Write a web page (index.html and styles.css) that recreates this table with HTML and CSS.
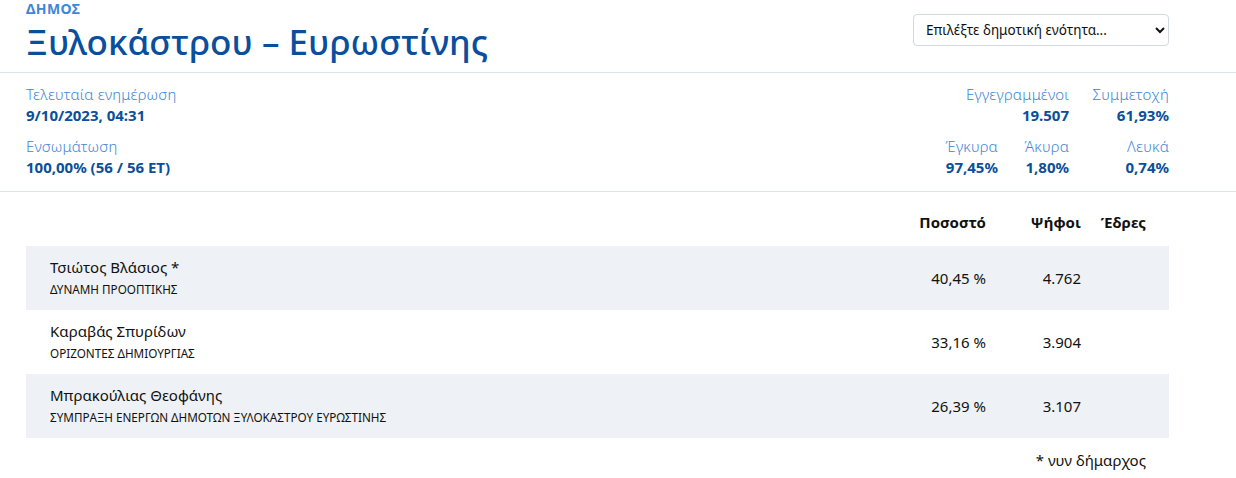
FILE: index.html
```html
<!DOCTYPE html>
<html lang="el">
<head>
<meta charset="utf-8">
<link rel="stylesheet" href="styles.css">
</head>
<body>
<header class="top">
  <div class="titles">
    <div class="kicker">Δημος</div>
    <h1 class="title">Ξυλοκάστρου – Ευρωστίνης</h1>
  </div>
  <select class="picker">
    <option>Επιλέξτε δημοτική ενότητα...</option>
  </select>
</header>
<section class="stats">
  <div class="stats-left">
    <div class="stat">
      <div class="label">Τελευταία ενημέρωση</div>
      <div class="value">9/10/2023, 04:31</div>
    </div>
    <div class="stat">
      <div class="label">Ενσωμάτωση</div>
      <div class="value">100,00% (56 / 56 ΕΤ)</div>
    </div>
  </div>
  <div class="stats-right">
    <div class="stat r"></div>
    <div class="stat r">
      <div class="label">Εγγεγραμμένοι</div>
      <div class="value">19.507</div>
    </div>
    <div class="stat r">
      <div class="label">Συμμετοχή</div>
      <div class="value">61,93%</div>
    </div>
    <div class="stat r">
      <div class="label">Έγκυρα</div>
      <div class="value">97,45%</div>
    </div>
    <div class="stat r">
      <div class="label">Άκυρα</div>
      <div class="value">1,80%</div>
    </div>
    <div class="stat r">
      <div class="label">Λευκά</div>
      <div class="value">0,74%</div>
    </div>
  </div>
</section>
<main class="results">
  <div class="row head">
    <div class="cell name"></div>
    <div class="cell pct">Ποσοστό</div>
    <div class="cell votes">Ψήφοι</div>
    <div class="cell seats">Έδρες</div>
  </div>
  <div class="row alt">
    <div class="cell name">
      <div class="cand">Τσιώτος Βλάσιος *</div>
      <div class="party">ΔΥΝΑΜΗ ΠΡΟΟΠΤΙΚΗΣ</div>
    </div>
    <div class="cell pct">40,45 %</div>
    <div class="cell votes">4.762</div>
    <div class="cell seats"></div>
  </div>
  <div class="row">
    <div class="cell name">
      <div class="cand">Καραβάς Σπυρίδων</div>
      <div class="party">ΟΡΙΖΟΝΤΕΣ ΔΗΜΙΟΥΡΓΙΑΣ</div>
    </div>
    <div class="cell pct">33,16 %</div>
    <div class="cell votes">3.904</div>
    <div class="cell seats"></div>
  </div>
  <div class="row alt">
    <div class="cell name">
      <div class="cand">Μπρακούλιας Θεοφάνης</div>
      <div class="party">ΣΥΜΠΡΑΞΗ ΕΝΕΡΓΩΝ ΔΗΜΟΤΩΝ ΞΥΛΟΚΑΣΤΡΟΥ ΕΥΡΩΣΤΙΝΗΣ</div>
    </div>
    <div class="cell pct">26,39 %</div>
    <div class="cell votes">3.107</div>
    <div class="cell seats"></div>
  </div>
  <div class="note">* νυν δήμαρχος</div>
</main>
</body>
</html>
```
FILE: styles.css
```css
* { box-sizing: border-box; }
html, body { margin: 0; padding: 0; background: #fff; }
body {
  font-family: "Noto Sans", "Open Sans", sans-serif;
  color: #111;
  width: 1236px;
}
.top {
  display: flex;
  justify-content: space-between;
  align-items: flex-start;
  padding: 0 67px 0 26px;
  height: 73px;
  border-bottom: 1px solid #dde3ea;
}
.kicker {
  padding-top: 2px;
  font-size: 14px;
  font-weight: 700;
  text-transform: uppercase;
  color: #3f86d6;
  line-height: 14px;
  letter-spacing: 0.4px;
}
.title {
  margin: 6px 0 0;
  font-size: 35px;
  font-weight: 500;
  color: #0a4f9e;
  line-height: 40px;
}
.picker {
  margin-top: 14px;
  width: 256px;
  height: 32px;
  border: 1px solid #d3d9e0;
  border-radius: 4px;
  background: #fff;
  font-family: inherit;
  font-size: 13.5px;
  color: #111;
  padding: 0 8px;
}
.stats {
  display: flex;
  justify-content: space-between;
  padding: 11px 67px 10px 26px;
  height: 119px;
  border-bottom: 1px solid #dde3ea;
}
.stats-left, .stats-right {
  display: grid;
  row-gap: 10px;
  align-content: start;
}
.stats-right {
  grid-template-columns: 71px 71px 100px;
}
.stat.r {
  display: flex;
  flex-direction: column;
  align-items: flex-end;
  white-space: nowrap;
}
.label {
  font-size: 15px;
  color: #3f86d6;
  line-height: 21px;
  font-weight: 300;
  letter-spacing: 0.2px;
}
.value {
  font-size: 15px;
  font-weight: 700;
  color: #0b4f9a;
  line-height: 21px;
}
.results {
  padding: 20px 67px 0 26px;
}
.row {
  display: grid;
  grid-template-columns: 1fr 100px 95px 88px;
  align-items: center;
  height: 64px;
}
.row.head {
  height: 34px;
  align-items: start;
  font-size: 15px;
  font-weight: 700;
  color: #111;
}
.row.alt { background: #eef1f5; }
.cell.name { padding-left: 24px; }
.cell.pct, .cell.votes { text-align: right; font-size: 15px; }
.cell.seats { text-align: right; padding-right: 23px; font-size: 15px; }
.cand { font-size: 15px; line-height: 23px; }
.party { font-size: 11.7px; line-height: 21px; text-transform: uppercase; }
.note {
  text-align: right;
  padding-right: 23px;
  font-size: 15px;
  margin-top: 12px;
}
```
